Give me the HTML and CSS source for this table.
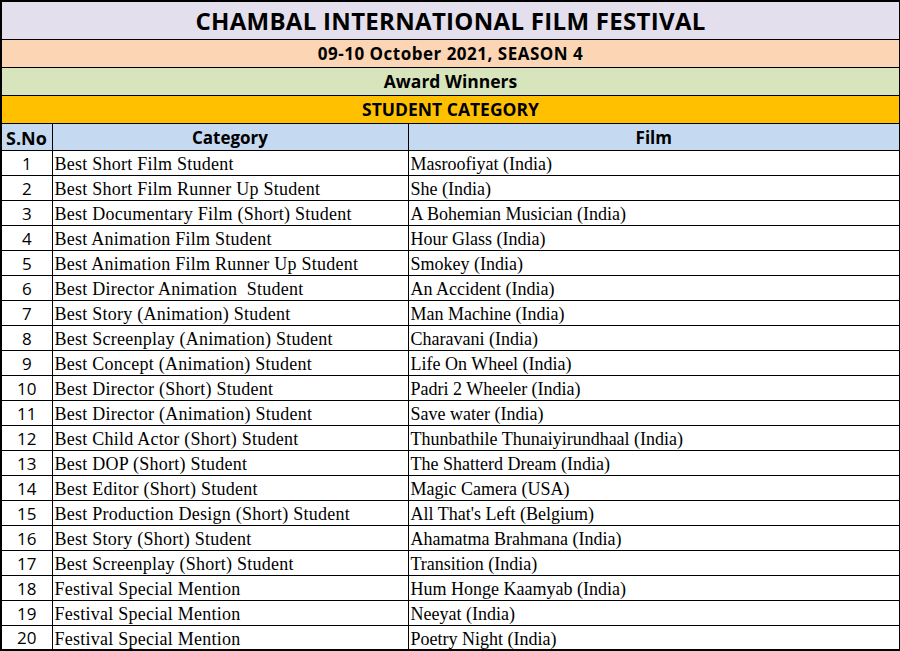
FILE: index.html
```html
<!DOCTYPE html>
<html>
<head>
<meta charset="utf-8">
<link rel="stylesheet" href="styles.css">
</head>
<body>
<table class="sheet">
  <colgroup>
    <col class="c-no">
    <col class="c-cat">
    <col class="c-film">
  </colgroup>
  <tbody>
    <tr class="r-title"><td colspan="3">CHAMBAL INTERNATIONAL FILM FESTIVAL</td></tr>
    <tr class="r-date"><td colspan="3">09-10 October 2021, SEASON 4</td></tr>
    <tr class="r-award"><td colspan="3">Award Winners</td></tr>
    <tr class="r-cat"><td colspan="3">STUDENT CATEGORY</td></tr>
    <tr class="r-head"><td>S.No</td><td>Category</td><td>Film</td></tr>
    <tr class="row"><td class="no">1</td><td class="cat">Best Short Film Student</td><td>Masroofiyat (India)</td></tr>
    <tr class="row"><td class="no">2</td><td class="cat">Best Short Film Runner Up Student</td><td>She (India)</td></tr>
    <tr class="row"><td class="no">3</td><td class="cat">Best Documentary Film (Short) Student</td><td>A Bohemian Musician (India)</td></tr>
    <tr class="row"><td class="no">4</td><td class="cat">Best Animation Film Student</td><td>Hour Glass (India)</td></tr>
    <tr class="row"><td class="no">5</td><td class="cat">Best Animation Film Runner Up Student</td><td>Smokey (India)</td></tr>
    <tr class="row"><td class="no">6</td><td class="cat">Best Director Animation &nbsp;Student</td><td>An Accident (India)</td></tr>
    <tr class="row"><td class="no">7</td><td class="cat">Best Story (Animation) Student</td><td>Man Machine (India)</td></tr>
    <tr class="row"><td class="no">8</td><td class="cat">Best Screenplay (Animation) Student</td><td>Charavani (India)</td></tr>
    <tr class="row"><td class="no">9</td><td class="cat">Best Concept (Animation) Student</td><td>Life On Wheel (India)</td></tr>
    <tr class="row"><td class="no">10</td><td class="cat">Best Director (Short) Student</td><td>Padri 2 Wheeler (India)</td></tr>
    <tr class="row"><td class="no">11</td><td class="cat">Best Director (Animation) Student</td><td>Save water (India)</td></tr>
    <tr class="row"><td class="no">12</td><td class="cat">Best Child Actor (Short) Student</td><td>Thunbathile Thunaiyirundhaal (India)</td></tr>
    <tr class="row"><td class="no">13</td><td class="cat">Best DOP (Short) Student</td><td>The Shatterd Dream (India)</td></tr>
    <tr class="row"><td class="no">14</td><td class="cat">Best Editor (Short) Student</td><td>Magic Camera (USA)</td></tr>
    <tr class="row"><td class="no">15</td><td class="cat">Best Production Design (Short) Student</td><td>All That's Left (Belgium)</td></tr>
    <tr class="row"><td class="no">16</td><td class="cat">Best Story (Short) Student</td><td>Ahamatma Brahmana (India)</td></tr>
    <tr class="row"><td class="no">17</td><td class="cat">Best Screenplay (Short) Student</td><td>Transition (India)</td></tr>
    <tr class="row"><td class="no">18</td><td class="cat">Festival Special Mention</td><td>Hum Honge Kaamyab (India)</td></tr>
    <tr class="row"><td class="no">19</td><td class="cat">Festival Special Mention</td><td>Neeyat (India)</td></tr>
    <tr class="row"><td class="no">20</td><td class="cat">Festival Special Mention</td><td>Poetry Night (India)</td></tr>
  </tbody>
</table>
</body>
</html>
```
FILE: styles.css
```css
html, body {
  margin: 0;
  padding: 0;
  background: #ffffff;
}
.sheet {
  border-collapse: collapse;
  table-layout: fixed;
  width: 899px;
  margin: 0;
  border: 2px solid #000;
}
.c-no { width: 51px; }
.c-cat { width: 356px; }
.c-film { width: 492px; }
.sheet td {
  border: 1px solid #000;
  padding: 0 2px;
  white-space: nowrap;
  overflow: hidden;
  box-sizing: border-box;
}
.r-title td, .r-date td, .r-award td, .r-cat td, .r-head td {
  font-family: "Open Sans", "Liberation Sans", sans-serif;
  font-weight: 700;
  text-align: center;
  color: #000;
  padding: 0;
}
.r-title td {
  background: #e4dfec;
  height: 38px;
  font-size: 24px;
  letter-spacing: 0.3px;
}
.r-date td {
  background: #fcd5b4;
  height: 28px;
  font-size: 17px;
  letter-spacing: 0.5px;
}
.r-award td {
  background: #d8e4bc;
  height: 28px;
  font-size: 17.5px;
}
.r-cat td {
  background: #ffc000;
  height: 28px;
  font-size: 17.5px;
}
.r-head td {
  background: #c5d9f1;
  height: 27px;
  font-size: 17px;
  line-height: 22px;
  padding-top: 2px;
}
.r-head td:first-child {
  text-align: left;
  padding-left: 4px;
  font-size: 18px;
}
.row td {
  height: 25px;
  font-family: "Liberation Serif", "Times New Roman", serif;
  font-size: 18px;
  line-height: 20px;
  color: #000;
  padding: 3px 0 0 2px;
}
.row td.cat {
  letter-spacing: 0.25px;
}
.row td.no {
  font-family: "Open Sans", "Liberation Sans", sans-serif;
  font-size: 17px;
  line-height: 20px;
  text-align: center;
  padding: 2px 0 0 0;
}
```
